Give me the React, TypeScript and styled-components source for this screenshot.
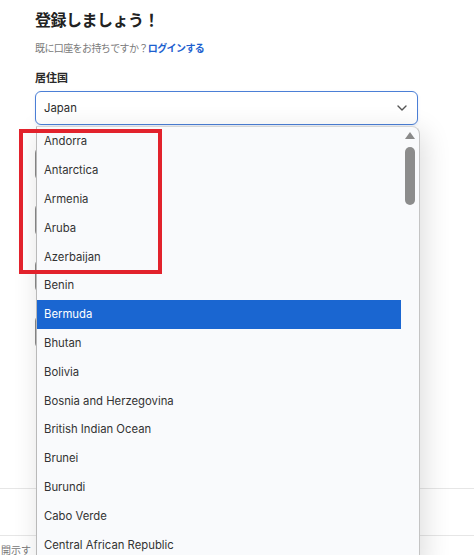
import React from 'react';
import styled, { createGlobalStyle } from 'styled-components';

const GlobalStyle = createGlobalStyle`
  html, body {
    margin: 0;
    padding: 0;
    background: #ffffff;
    overflow: hidden;
  }
  body {
    font-family: Inter, "Noto Sans CJK JP", sans-serif;
    color: #2b2b2b;
  }
`;

const Page = styled.div`
  position: relative;
  width: 474px;
  height: 555px;
  overflow: hidden;
`;

const Form = styled.div`
  display: flex;
  flex-direction: column;
  padding: 8px 56px 0 35px;
`;

const Title = styled.h1`
  margin: 0;
  font-family: "Noto Sans CJK JP", sans-serif;
  font-size: 16px;
  font-weight: 700;
  line-height: 22px;
  color: #222;
  letter-spacing: -0.5px;
`;

const Lead = styled.p`
  margin: 11px 0 0;
  font-family: "Noto Sans CJK JP", sans-serif;
  font-size: 10px;
  line-height: 14px;
  color: #7a7a7a;
  letter-spacing: -0.6px;
`;

const LoginLink = styled.a`
  color: #1d5fcf;
  font-weight: 700;
  text-decoration: none;
`;

const Label = styled.label`
  margin-top: 15px;
  font-family: "Noto Sans CJK JP", sans-serif;
  font-size: 11px;
  font-weight: 700;
  line-height: 14px;
  color: #2a2a2a;
`;

const SelectBox = styled.div`
  box-sizing: border-box;
  margin-top: 7px;
  height: 34px;
  border: 1.5px solid #4b7fd6;
  border-radius: 6px;
  display: flex;
  align-items: center;
  justify-content: space-between;
  padding: 0 10px 0 8px;
  font-size: 11.3px;
  color: #2d2d2d;
  background: #fff;
  box-shadow: 0 1px 3px rgba(60, 110, 200, 0.15);
`;

const Field = styled.div`
  margin-top: 22px;
  height: 32px;
  border: 1px solid #cfcfcf;
  border-left-color: #8a8a8a;
  border-radius: 6px;
`;

const Divider = styled.div<{ $top: number }>`
  margin-top: ${(p) => p.$top}px;
  height: 1px;
  background: #e6e6e6;
`;

const FooterNote = styled.div`
  margin: 6px 0 0 1px;
  font-family: "Noto Sans CJK JP", sans-serif;
  font-size: 10px;
  color: #777;
`;

const Dropdown = styled.div`
  position: absolute;
  left: 36px;
  top: 126px;
  width: 382px;
  height: 440px;
  display: flex;
  background: #f9fafc;
  border-left: 1px solid #b9b9b9;
  border-right: 1px solid #c4c4c4;
  border-top: 1px solid #d6d6d6;
  border-top-right-radius: 8px;
  box-shadow: 4px 6px 28px rgba(0, 0, 0, 0.14);
  overflow: hidden;
`;

const Options = styled.ul`
  margin: 0;
  padding: 0;
  list-style: none;
  flex: 1;
`;

const Option = styled.li<{ $active?: boolean }>`
  height: 28.8px;
  display: flex;
  align-items: center;
  padding-left: 7px;
  font-size: 11.3px;
  color: ${(p) => (p.$active ? '#ffffff' : '#333333')};
  background: ${(p) => (p.$active ? '#1a66d1' : 'transparent')};
`;

const ScrollTrack = styled.div`
  width: 18px;
  display: flex;
  flex-direction: column;
  align-items: center;
  padding-top: 5px;
  gap: 8px;
`;

const ScrollArrow = styled.div`
  width: 0;
  height: 0;
  border-left: 5px solid transparent;
  border-right: 5px solid transparent;
  border-bottom: 7px solid #8a8a8a;
`;

const ScrollThumb = styled.div`
  width: 10px;
  height: 58px;
  border-radius: 5px;
  background: #8c8c8c;
`;

const Annotation = styled.div`
  position: absolute;
  left: 19px;
  top: 129px;
  width: 135px;
  height: 137px;
  border: 4px solid #e2222c;
`;

const countries = [
  'Andorra',
  'Antarctica',
  'Armenia',
  'Aruba',
  'Azerbaijan',
  'Benin',
  'Bermuda',
  'Bhutan',
  'Bolivia',
  'Bosnia and Herzegovina',
  'British Indian Ocean',
  'Brunei',
  'Burundi',
  'Cabo Verde',
  'Central African Republic',
  'Chad',
];

const Chevron = () => (
  <svg width="10" height="6" viewBox="0 0 10 6" fill="none">
    <path d="M1 1l4 4 4-4" stroke="#555" strokeWidth="1.4" strokeLinecap="round" strokeLinejoin="round" />
  </svg>
);

export default function App() {
  return (
    <Page>
      <GlobalStyle />
      <Form>
        <Title>登録しましょう！</Title>
        <Lead>
          既に口座をお持ちですか？<LoginLink href="#">ログインする</LoginLink>
        </Lead>
        <Label>居住国</Label>
        <SelectBox>
          <span>Japan</span>
          <Chevron />
        </SelectBox>
        <Field />
        <Field />
        <Field />
        <Field />
      </Form>
      <Divider $top={139} />
      <Divider $top={46} />
      <FooterNote>開示す</FooterNote>
      <Dropdown>
        <Options>
          {countries.map((c) => (
            <Option key={c} $active={c === 'Bermuda'}>
              {c}
            </Option>
          ))}
        </Options>
        <ScrollTrack>
          <ScrollArrow />
          <ScrollThumb />
        </ScrollTrack>
      </Dropdown>
      <Annotation />
    </Page>
  );
}
